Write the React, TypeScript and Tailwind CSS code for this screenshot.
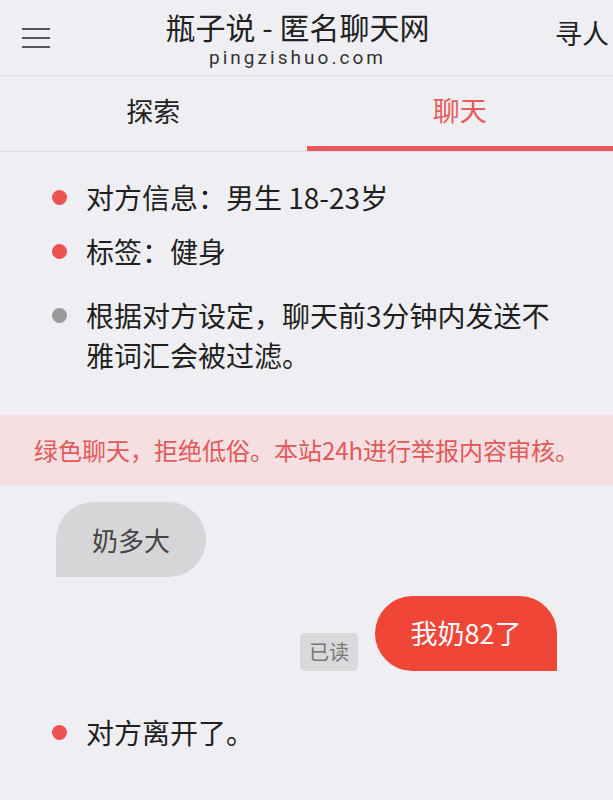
export default function App() {
    const font = { fontFamily: '"Noto Sans CJK SC", "Noto Sans", sans-serif' };

    return (
        <div className="w-[613px] h-[800px] bg-[#efeff3] overflow-hidden text-[#1f1f1f]" style={font}>
            {/* Header */}
            <header className="relative h-[76px] flex flex-col items-center border-b border-[#e2e2e6]">
                <div className="absolute left-[22px] top-[28px] flex flex-col gap-[7px]">
                    <span className="block w-[28px] h-[2px] bg-[#555]"></span>
                    <span className="block w-[28px] h-[2px] bg-[#555]"></span>
                    <span className="block w-[28px] h-[2px] bg-[#555]"></span>
                </div>
                <h1 className="mt-[6px] -ml-[18px] text-[30px] leading-[40px] text-[#222] whitespace-nowrap">瓶子说 - 匿名聊天网</h1>
                <span className="-ml-[18px] text-[19px] leading-[24px] tracking-[0.16em] text-[#333] font-['Roboto']">pingzishuo.com</span>
                <span className="absolute left-[555px] top-[15px] text-[27px] leading-[36px] whitespace-nowrap text-[#222]">寻人</span>
            </header>

            {/* Tabs */}
            <nav className="flex h-[76px] border-b border-[#dedee2]">
                <div className="flex-1 flex items-center justify-center pb-[4px] text-[27px] text-[#222]">
                    <span>探索</span>
                </div>
                <div className="flex-1 flex flex-col">
                    <div className="flex-1 flex items-center justify-center pb-[2px] text-[27px] text-[#e85a5a]">聊天</div>
                    <div className="h-[5px] bg-[#e85a5a]"></div>
                </div>
            </nav>

            {/* Info */}
            <section className="pt-[20px] pl-[52px] pr-[40px] flex flex-col text-[28px] leading-[40px]">
                <div className="flex items-center gap-[19px] h-[50px]">
                    <span className="w-[15px] h-[15px] rounded-full bg-[#ef5350] shrink-0"></span>
                    <span>对方信息：男生 18-23岁</span>
                </div>
                <div className="flex items-center gap-[19px] h-[58px]">
                    <span className="w-[15px] h-[15px] rounded-full bg-[#ef5350] shrink-0"></span>
                    <span>标签：健身</span>
                </div>
                <div className="flex items-start gap-[19px] mt-[15px]">
                    <span className="w-[15px] h-[15px] rounded-full bg-[#9a9a9a] shrink-0 mt-[13px]"></span>
                    <span className="whitespace-nowrap">根据对方设定，聊天前3分钟内发送不<br />雅词汇会被过滤。</span>
                </div>
            </section>

            {/* Notice */}
            <div className="mt-[40px] h-[70px] bg-[#f5dfe1] flex items-center justify-center text-[24px] text-[#e05a5a] whitespace-nowrap">
                绿色聊天，拒绝低俗。本站24h进行举报内容审核。
            </div>

            {/* Messages */}
            <section className="px-[56px] pt-[17px] flex flex-col">
                <div className="self-start h-[75px] w-[150px] flex items-center justify-center bg-[#d6d6d8] rounded-[38px] rounded-bl-none text-[26px] text-[#444]">
                    奶多大
                </div>
                <div className="self-end mt-[19px] flex items-end gap-[17px]">
                    <span className="h-[38px] w-[58px] flex items-center justify-center rounded-[5px] bg-[#d9d9db] text-[20px] text-[#777]">已读</span>
                    <div className="h-[75px] w-[182px] flex items-center justify-center bg-[#f04638] rounded-[38px] rounded-br-none text-[27px] text-white">
                        我奶82了
                    </div>
                </div>
            </section>

            <div className="mt-[41px] pl-[52px] flex items-center gap-[19px] text-[28px] leading-[40px]">
                <span className="w-[15px] h-[15px] rounded-full bg-[#ef5350] shrink-0"></span>
                <span>对方离开了。</span>
            </div>
        </div>
    );
}
